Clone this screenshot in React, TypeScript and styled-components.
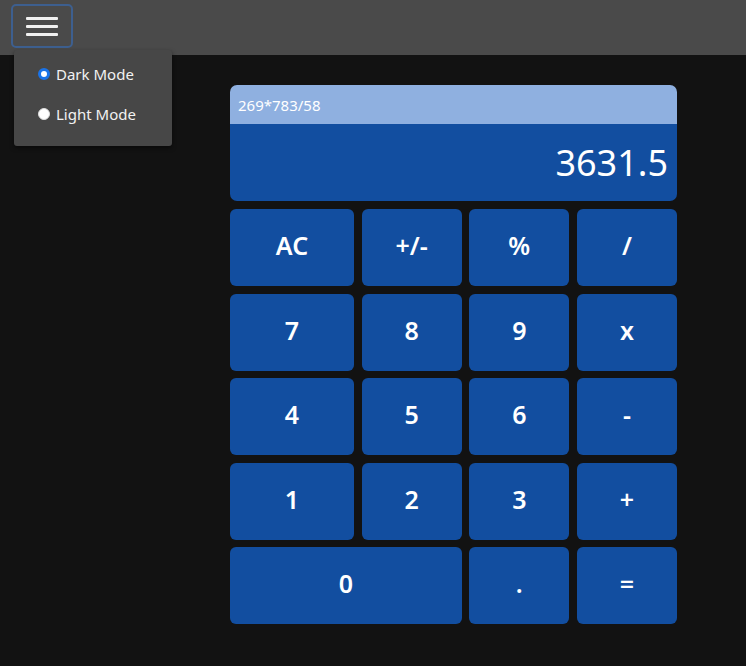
import React, { useState } from "react";
import styled, { createGlobalStyle } from "styled-components";

const Global = createGlobalStyle`
  html, body { margin: 0; padding: 0; background: #121212; }
  body { font-family: "Noto Sans", "Open Sans", sans-serif; color: #fff; min-height: 666px; }
`;

const Page = styled.div`
  position: relative;
  min-height: 666px;
  background: #121212;
`;

const NavBar = styled.header`
  height: 55px;
  background: #4a4a4a;
  display: flex;
  align-items: flex-start;
  padding: 4px 0 0 11px;
  box-sizing: border-box;
`;

const MenuButton = styled.button`
  width: 62px;
  height: 44px;
  background: transparent;
  border: 2px solid #3d5f8f;
  border-radius: 5px;
  display: flex;
  flex-direction: column;
  align-items: center;
  justify-content: center;
  gap: 5px;
  padding: 0;
  cursor: pointer;
`;

const MenuLine = styled.span`
  display: block;
  width: 32px;
  height: 3px;
  background: #f0f0f0;
  border-radius: 1px;
`;

const Dropdown = styled.div`
  position: absolute;
  left: 14px;
  top: 50px;
  width: 158px;
  height: 96px;
  background: #474747;
  border-radius: 3px;
  box-shadow: 0 2px 4px rgba(0, 0, 0, 0.5);
  display: flex;
  flex-direction: column;
  padding: 14px 0 0 24px;
  box-sizing: border-box;
  gap: 20px;
`;

const RadioLabel = styled.label`
  display: flex;
  align-items: center;
  gap: 6px;
  font-size: 15px;
  color: #f2f2f2;
  height: 20px;
  cursor: pointer;
`;

const Radio = styled.span<{ $checked: boolean }>`
  width: 12px;
  height: 12px;
  border-radius: 50%;
  box-sizing: border-box;
  background: #fff;
  border: ${(p) => (p.$checked ? "3px solid #1a73e8" : "1px solid #ddd")};
  flex: none;
`;

const Main = styled.main`
  display: flex;
  justify-content: flex-start;
  padding: 30px 0 0 230px;
`;

const Calculator = styled.div`
  width: 447px;
  display: flex;
  flex-direction: column;
  gap: 8px;
`;

const Display = styled.div`
  border-radius: 7px;
  overflow: hidden;
  display: flex;
  flex-direction: column;
`;

const Expression = styled.div`
  height: 39px;
  background: #8fb0e0;
  color: #fff;
  font-size: 15px;
  display: flex;
  align-items: center;
  padding: 0 8px;
  box-sizing: border-box;
`;

const Result = styled.div`
  height: 77px;
  background: #124ea0;
  color: #fff;
  font-size: 36px;
  display: flex;
  align-items: center;
  justify-content: flex-end;
  padding: 0 9px 0 0;
  box-sizing: border-box;
`;

const Keypad = styled.div`
  display: grid;
  grid-template-columns: 124px 100px 100px 100px;
  grid-auto-rows: 77px;
  justify-content: space-between;
  align-content: space-between;
  height: 415px;
`;

const Key = styled.button<{ $span?: number }>`
  grid-column: span ${(p) => p.$span ?? 1};
  background: #124ea0;
  border: none;
  border-radius: 6px;
  color: #fff;
  font-family: "Noto Sans", "Open Sans", sans-serif;
  font-size: 25px;
  font-weight: 600;
  line-height: 1;
  cursor: pointer;
  padding: 0 0 4px 0;
`;

const keys: { label: string; span?: number }[] = [
  { label: "AC" }, { label: "+/-" }, { label: "%" }, { label: "/" },
  { label: "7" }, { label: "8" }, { label: "9" }, { label: "x" },
  { label: "4" }, { label: "5" }, { label: "6" }, { label: "-" },
  { label: "1" }, { label: "2" }, { label: "3" }, { label: "+" },
  { label: "0", span: 2 }, { label: "." }, { label: "=" },
];

export default function App() {
  const [mode, setMode] = useState("dark");
  return (
    <Page>
      <Global />
      <NavBar>
        <MenuButton aria-label="menu">
          <MenuLine />
          <MenuLine />
          <MenuLine />
        </MenuButton>
      </NavBar>
      <Dropdown>
        <RadioLabel onClick={() => setMode("dark")}>
          <Radio $checked={mode === "dark"} />
          Dark Mode
        </RadioLabel>
        <RadioLabel onClick={() => setMode("light")}>
          <Radio $checked={mode === "light"} />
          Light Mode
        </RadioLabel>
      </Dropdown>
      <Main>
        <Calculator>
          <Display>
            <Expression>269*783/58</Expression>
            <Result>3631.5</Result>
          </Display>
          <Keypad>
            {keys.map((k) => (
              <Key key={k.label} $span={k.span}>
                {k.label}
              </Key>
            ))}
          </Keypad>
        </Calculator>
      </Main>
    </Page>
  );
}
